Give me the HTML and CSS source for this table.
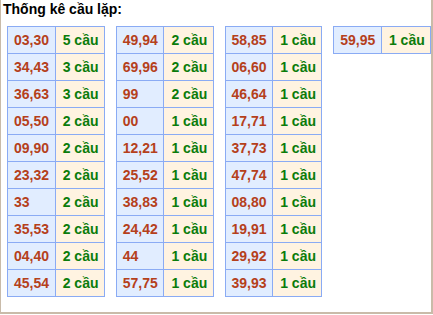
FILE: index.html
```html
<!DOCTYPE html>
<html>
<head>
<meta charset="utf-8">
<link rel="stylesheet" href="styles.css">
</head>
<body>
<div class="box">
  <div class="title">Thống kê cầu lặp:</div>
  <div class="tables">
    <table class="t">
      <tr><td class="n">03,30</td><td class="c">5 cầu</td></tr>
      <tr><td class="n">34,43</td><td class="c">3 cầu</td></tr>
      <tr><td class="n">36,63</td><td class="c">3 cầu</td></tr>
      <tr><td class="n">05,50</td><td class="c">2 cầu</td></tr>
      <tr><td class="n">09,90</td><td class="c">2 cầu</td></tr>
      <tr><td class="n">23,32</td><td class="c">2 cầu</td></tr>
      <tr><td class="n">33</td><td class="c">2 cầu</td></tr>
      <tr><td class="n">35,53</td><td class="c">2 cầu</td></tr>
      <tr><td class="n">04,40</td><td class="c">2 cầu</td></tr>
      <tr><td class="n">45,54</td><td class="c">2 cầu</td></tr>
    </table>
    <table class="t">
      <tr><td class="n">49,94</td><td class="c">2 cầu</td></tr>
      <tr><td class="n">69,96</td><td class="c">2 cầu</td></tr>
      <tr><td class="n">99</td><td class="c">2 cầu</td></tr>
      <tr><td class="n">00</td><td class="c">1 cầu</td></tr>
      <tr><td class="n">12,21</td><td class="c">1 cầu</td></tr>
      <tr><td class="n">25,52</td><td class="c">1 cầu</td></tr>
      <tr><td class="n">38,83</td><td class="c">1 cầu</td></tr>
      <tr><td class="n">24,42</td><td class="c">1 cầu</td></tr>
      <tr><td class="n">44</td><td class="c">1 cầu</td></tr>
      <tr><td class="n">57,75</td><td class="c">1 cầu</td></tr>
    </table>
    <table class="t">
      <tr><td class="n">58,85</td><td class="c">1 cầu</td></tr>
      <tr><td class="n">06,60</td><td class="c">1 cầu</td></tr>
      <tr><td class="n">46,64</td><td class="c">1 cầu</td></tr>
      <tr><td class="n">17,71</td><td class="c">1 cầu</td></tr>
      <tr><td class="n">37,73</td><td class="c">1 cầu</td></tr>
      <tr><td class="n">47,74</td><td class="c">1 cầu</td></tr>
      <tr><td class="n">08,80</td><td class="c">1 cầu</td></tr>
      <tr><td class="n">19,91</td><td class="c">1 cầu</td></tr>
      <tr><td class="n">29,92</td><td class="c">1 cầu</td></tr>
      <tr><td class="n">39,93</td><td class="c">1 cầu</td></tr>
    </table>
    <table class="t">
      <tr><td class="n">59,95</td><td class="c">1 cầu</td></tr>
    </table>
  </div>
</div>
</body>
</html>
```
FILE: styles.css
```css
html, body {
  margin: 0;
  padding: 0;
  background: #ffffff;
}
body {
  font-family: "Liberation Sans", Arial, sans-serif;
  font-weight: bold;
  font-size: 14px;
}
.box {
  width: 430px;
  height: 312px;
  border-left: 1px solid #c9bba9;
  border-right: 2px solid #c9bba9;
  border-bottom: 2px solid #c9bba9;
  box-sizing: content-box;
}
.title {
  color: #000;
  padding: 1px 0 0 2px;
  height: 26px;
  box-sizing: border-box;
  line-height: 16px;
}
.tables {
  display: flex;
  align-items: flex-start;
  gap: 11px;
  padding-left: 6px;
}
.t {
  border-collapse: collapse;
}
.t td {
  border: 1px solid #8aabf4;
  height: 27px;
  padding: 0 0 0 6px;
  text-align: left;
  vertical-align: middle;
  line-height: 16px;
  box-sizing: border-box;
}
.t td.n {
  width: 48px;
  background: #e1edff;
  color: #b5401b;
}
.t td.c {
  width: 50px;
  background: #fff3e1;
  color: #0b7c0b;
  padding-left: 7px;
}
```
